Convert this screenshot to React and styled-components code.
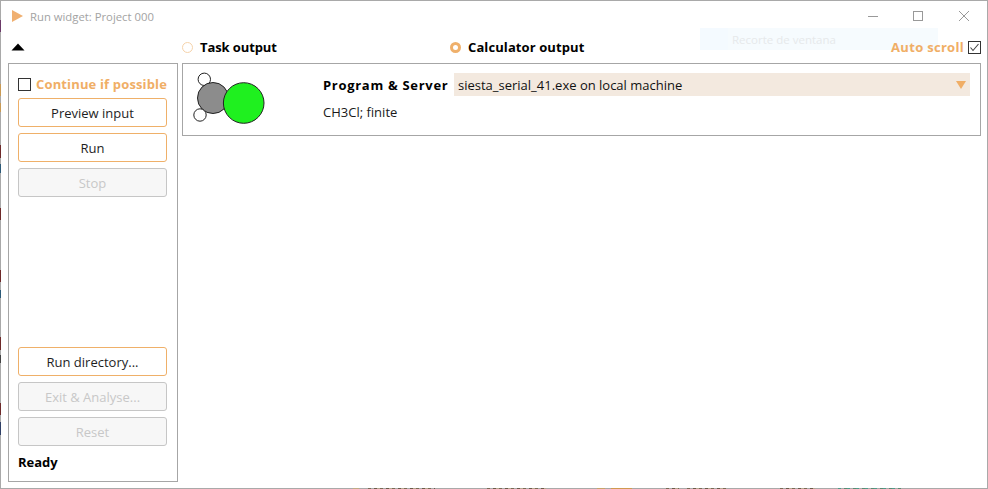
import React from "react";
import styled, { createGlobalStyle } from "styled-components";

const toGradient = (dir, length, stops, base) => {
  const parts = [];
  let at = 0;
  stops.forEach(([from, to, colors]) => {
    parts.push(`${base} ${at}px`, `${base} ${from}px`);
    let p = from;
    let i = 0;
    while (p < to) {
      const next = Math.min(to, p + 3);
      const c = colors[i % colors.length];
      parts.push(`${c} ${p}px`, `${c} ${next}px`);
      p = next;
      i += 1;
    }
    at = to;
  });
  parts.push(`${base} ${at}px`, `${base} ${length}px`);
  return `linear-gradient(${dir}, ${parts.join(", ")})`;
};

const RED = ["#6e2a2a"];
const BLUE = ["#2c5a78"];
const leftNoise = toGradient(
  "to bottom",
  489,
  [
    [20, 32, ["#6b3a68"]],
    [84, 96, ["#c99a55"]],
    [103, 112, ["#c99a55"]],
    [145, 158, RED],
    [164, 173, BLUE],
    [208, 220, RED],
    [270, 282, RED],
    [290, 298, BLUE],
    [337, 350, RED],
    [355, 363, ["#444444"]],
    [403, 415, RED],
    [422, 435, ["#2f3f66"]],
  ],
  "#a9a9a9"
);

const MIX = ["#7a6a55", "#a9a9a9", "#6b5a4a", "#b5a58f"];
const bottomNoise = toGradient(
  "to right",
  988,
  [
    [353, 359, ["#c0ab85"]],
    [368, 435, MIX],
    [487, 546, MIX],
    [597, 605, ["#c8a36a"]],
    [611, 632, ["#d09a50"]],
    [666, 679, MIX],
    [687, 729, MIX],
    [780, 815, MIX],
    [838, 901, ["#4f9a8a", "#a9a9a9", "#5a8a70"]],
  ],
  "#a9a9a9"
);

const GlobalStyle = createGlobalStyle`
  html, body { margin: 0; padding: 0; background: #fff; overflow: hidden; }
  #root { width: 988px; height: 489px; }
  * { box-sizing: border-box; }
`;

const Window = styled.div`
  position: relative;
  width: 988px;
  height: 489px;
  display: flex;
  flex-direction: column;
  background: #fff;
  border: 1px solid #a9a9a9;
  font-family: "Open Sans", "Noto Sans", sans-serif;
  font-size: 13px;
  color: #1a1a1a;
`;

const LeftEdge = styled.div`
  position: absolute;
  left: -1px;
  top: -1px;
  width: 1px;
  height: 489px;
  background: ${leftNoise};
`;

const BottomEdge = styled.div`
  position: absolute;
  left: -1px;
  bottom: -1px;
  width: 988px;
  height: 1px;
  background: ${bottomNoise};
`;

const TitleBar = styled.div`
  height: 30px;
  flex: none;
  display: flex;
  align-items: center;
  padding-left: 11px;
`;

const TitleText = styled.span`
  margin-left: 7px;
  font-size: 11.3px;
  color: #a3a3a3;
`;

const WindowControls = styled.div`
  margin-left: auto;
  display: flex;
  align-items: center;
  gap: 35px;
  padding-right: 18px;
`;

const Ghost = styled.div`
  position: absolute;
  left: 699px;
  top: 27px;
  width: 238px;
  height: 22px;
  display: flex;
  align-items: center;
  padding-left: 32px;
  background: linear-gradient(to right, #f4faff 0, #f4faff 28px, #f6fbfe 28px);
  color: #e6e9eb;
  font-size: 11.5px;
`;

const TopRow = styled.div`
  position: relative;
  z-index: 1;
  height: 32px;
  flex: none;
  display: grid;
  grid-template-columns: 171px 268px 1fr auto;
  align-items: center;
  padding: 0 6px 0 10px;
`;

const RadioOption = styled.label`
  display: flex;
  align-items: center;
  gap: 7px;
  font-weight: 700;
  color: #000;
  letter-spacing: ${(p) => p.$spacing}px;
`;

const Radio = styled.span`
  width: 11px;
  height: 11px;
  border-radius: 50%;
  background: #fff;
  border: ${(p) => (p.$on ? "3px solid #efb06b" : "1px solid #f6d3aa")};
`;

const AutoScroll = styled.label`
  display: flex;
  align-items: center;
  gap: 4px;
  font-weight: 700;
  color: #f0ae66;
  letter-spacing: 0.3px;
`;

const Main = styled.div`
  flex: 1;
  display: flex;
  gap: 4px;
  padding: 0 6px 6px 7px;
  min-height: 0;
`;

const SidePanel = styled.div`
  width: 170px;
  flex: none;
  border: 1px solid #a6a6a6;
  padding: 12px 10px 10px 9px;
  display: flex;
  flex-direction: column;
`;

const CheckRow = styled.label`
  display: flex;
  align-items: center;
  gap: 5px;
  height: 16px;
  font-weight: 700;
  color: #f0ae66;
  white-space: nowrap;
  letter-spacing: 0.15px;
`;

const CheckBox = styled.span`
  width: 13px;
  height: 13px;
  flex: none;
  border: 1px solid #333;
  display: flex;
  align-items: center;
  justify-content: center;
`;

const ButtonStack = styled.div`
  display: flex;
  flex-direction: column;
  gap: 6px;
  margin-top: ${(p) => p.$top || 0}px;
`;

const Button = styled.button`
  width: 149px;
  height: 29px;
  padding: 0;
  border-radius: 3px;
  outline: none;
  appearance: none;
  font: inherit;
  border: 1px solid ${(p) => (p.$muted ? "#c6c6c6" : "#efb069")};
  background: ${(p) => (p.$muted ? "#f7f7f7" : "#fff")};
  color: ${(p) => (p.$muted ? "#c8c8c8" : "#1e1e1e")};
`;

const Status = styled.div`
  margin-top: 7px;
  font-weight: 700;
  color: #000;
`;

const Spacer = styled.div`
  flex: 1;
`;

const CalcColumn = styled.div`
  flex: 1;
  min-width: 0;
`;

const CalcCard = styled.div`
  height: 73px;
  border: 1px solid #a6a6a6;
  display: flex;
  padding: 9px 10px 0 10px;
`;

const MoleculeBox = styled.div`
  width: 130px;
  flex: none;
  margin-top: -4px;
`;

const CardBody = styled.div`
  flex: 1;
  display: flex;
  flex-direction: column;
  gap: 5px;
`;

const ProgramRow = styled.div`
  display: flex;
  align-items: center;
  gap: 6px;
`;

const ProgramLabel = styled.span`
  width: 125px;
  flex: none;
  white-space: nowrap;
  font-weight: 700;
  color: #000;
  letter-spacing: 0.7px;
`;

const Select = styled.div`
  flex: 1;
  height: 23px;
  display: flex;
  align-items: center;
  justify-content: space-between;
  padding: 0 4px;
  background: #f3e9df;
  color: #111;
`;

const Description = styled.div`
  height: 22px;
  line-height: 22px;
`;

const Up = () => (
  <svg width="14" height="8" viewBox="0 0 14 8"><path d="M7 0.5 13.5 7.5H0.5Z" fill="#000" /></svg>
);

export default function App() {
  return (
    <>
      <GlobalStyle />
      <Window>
        <LeftEdge />
        <BottomEdge />
        <TitleBar>
          <svg width="11" height="12" viewBox="0 0 11 12"><path d="M0 0 11 6 0 12Z" fill="#f0b071" /></svg>
          <TitleText>Run widget: Project 000</TitleText>
          <WindowControls>
            <svg width="10" height="10" viewBox="0 0 10 10"><path d="M0 5.5H10" stroke="#999" /></svg>
            <svg width="10" height="10" viewBox="0 0 10 10"><rect x="0.5" y="0.5" width="9" height="9" fill="none" stroke="#999" /></svg>
            <svg width="11" height="10" viewBox="0 0 11 10"><path d="M1 0 11 10M11 0 1 10" stroke="#999" fill="none" /></svg>
          </WindowControls>
        </TitleBar>
        <Ghost>Recorte de ventana</Ghost>
        <TopRow>
          <Up />
          <RadioOption $spacing={-0.1}><Radio />Task output</RadioOption>
          <RadioOption $spacing={0.1}><Radio $on />Calculator output</RadioOption>
          <AutoScroll>
            Auto scroll
            <CheckBox>
              <svg width="11" height="11" viewBox="0 0 11 11"><path d="M1.5 5.5 4 8.5 9.5 2" fill="none" stroke="#444" strokeWidth="1.1" /></svg>
            </CheckBox>
          </AutoScroll>
        </TopRow>
        <Main>
          <SidePanel>
            <CheckRow><CheckBox />Continue if possible</CheckRow>
            <ButtonStack $top={6}>
              <Button>Preview input</Button>
              <Button>Run</Button>
              <Button $muted disabled>Stop</Button>
            </ButtonStack>
            <Spacer />
            <ButtonStack>
              <Button>Run directory...</Button>
              <Button $muted disabled>Exit &amp; Analyse...</Button>
              <Button $muted disabled>Reset</Button>
            </ButtonStack>
            <Status>Ready</Status>
          </SidePanel>
          <CalcColumn>
            <CalcCard>
              <MoleculeBox>
                <svg width="90" height="64" viewBox="0 0 90 64">
                  <g stroke="#222" strokeWidth="1">
                    <circle cx="11.3" cy="10.3" r="6.2" fill="#fff" />
                    <circle cx="20" cy="29" r="15.5" fill="#8c8c8c" />
                    <circle cx="7" cy="46" r="6.2" fill="#fff" />
                    <circle cx="50.7" cy="34" r="20.3" fill="#1ff01f" />
                  </g>
                </svg>
              </MoleculeBox>
              <CardBody>
                <ProgramRow>
                  <ProgramLabel>Program &amp; Server</ProgramLabel>
                  <Select>
                    siesta_serial_41.exe on local machine
                    <svg width="10" height="8" viewBox="0 0 10 8"><path d="M0 0H10L5 8Z" fill="#f0ae66" /></svg>
                  </Select>
                </ProgramRow>
                <Description>CH3Cl; finite</Description>
              </CardBody>
            </CalcCard>
          </CalcColumn>
        </Main>
      </Window>
    </>
  );
}
